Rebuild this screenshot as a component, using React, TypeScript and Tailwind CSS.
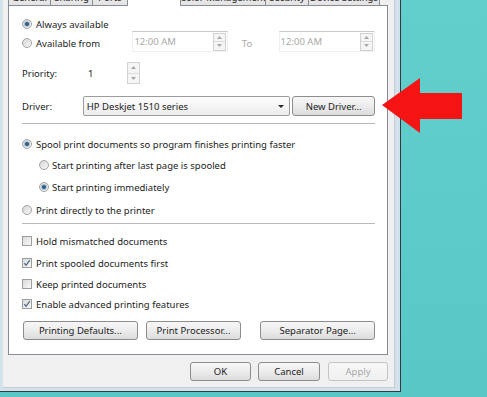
import React from 'react';
import clsx from 'clsx';

const Radio = ({ checked }: { checked?: boolean }) => (
    <span className="w-[10px] h-[10px] shrink-0 rounded-full border border-[#a3a3a3] bg-linear-to-br from-[#d6d6d6] to-[#f8f8f8] flex items-center justify-center">
        {checked && <span className="w-[4px] h-[4px] rounded-full bg-[#2f5a80] ring-1 ring-[#a9c2d6]" />}
    </span>
);

const Checkbox = ({ checked }: { checked?: boolean }) => (
    <span className="w-[10px] h-[10px] shrink-0 border border-[#9e9e9e] bg-linear-to-br from-[#dadada] to-[#f9f9f9] flex items-center justify-center">
        {checked && (
            <svg viewBox="0 0 8 8" className="w-[8px] h-[8px]">
                <path d="M1.3 4.3 L3.1 6.3 L6.8 1.1" stroke="#4f6b8c" strokeWidth="1.3" fill="none" />
            </svg>
        )}
    </span>
);

const Spinner = ({ className }: { className?: string }) => (
    <div className={clsx('w-[13px] flex flex-col border border-[#d2d2d2] bg-[#f5f5f5]', className)}>
        <div className="flex-1 flex items-center justify-center border-b border-[#dcdcdc]">
            <svg viewBox="0 0 5 3" className="w-[5px] h-[3px]"><path d="M0 3 L2.5 0 L5 3 Z" fill="#a8a8a8" /></svg>
        </div>
        <div className="flex-1 flex items-center justify-center">
            <svg viewBox="0 0 5 3" className="w-[5px] h-[3px]"><path d="M0 0 L2.5 3 L5 0 Z" fill="#a8a8a8" /></svg>
        </div>
    </div>
);

const TimeField = ({ className }: { className?: string }) => (
    <div className={clsx('self-start -mt-[2px] h-[21px] flex items-center border-t border-[#c9c9c9] border-l border-r border-b border-l-[#f0f0f0] border-r-[#f0f0f0] border-b-[#f0f0f0] pl-[1px] pr-[1px]', className)}>
        <span className="flex-1 text-[#a8a8a8]">12:00 AM</span>
        <Spinner className="h-[18px]" />
    </div>
);

const Button = ({ children, className }: { children: React.ReactNode; className?: string }) => (
    <div className={clsx('h-[19px] flex items-center justify-center rounded-[3px] border border-[#8d8d8d] bg-linear-to-b from-[#f7f7f7] via-[#ececec] to-[#dcdcdc] text-[#222]', className)}>
        {children}
    </div>
);

const tabs = [
    { label: 'General', w: 'w-[42px]' },
    { label: 'Sharing', w: 'w-[42px]' },
    { label: 'Ports', w: 'w-[35px]' },
    { label: 'Advanced', w: 'w-[53px]', active: true },
    { label: 'Color Management', w: 'w-[85px]' },
    { label: 'Security', w: 'w-[43px]' },
    { label: 'Device Settings', w: 'w-[72px] border-r' },
];

const App: React.FC = () => {
    return (
        <div className="relative w-[487px] h-[397px] overflow-hidden bg-linear-to-b from-[#62cfcd] to-[#58c7c5] font-['Noto_Sans','Open_Sans',sans-serif] text-[9.5px] leading-[13px] text-[#222]">
            <div className="w-[401px] -mt-[13px] border-r border-b border-[#2f3b42] bg-[#d3e2ea] pl-[3px] pr-[5px] pb-[3px]">
                <div className="bg-[#f0f0f0] border-r border-b border-[#c2ced6] pl-[5px] pr-[6px] pb-[6px]">
                    {/* tab strip */}
                    <div className="flex h-[18px] items-end">
                        {tabs.map(tab => (
                            <div
                                key={tab.label}
                                className={clsx(
                                    'flex justify-center whitespace-nowrap border-t border-l border-[#898c95] pt-[1px]',
                                    tab.w,
                                    tab.active
                                        ? 'relative z-10 h-[19px] -mb-[1px] bg-white items-start'
                                        : 'h-[18px] bg-linear-to-b from-[#f3f3f3] to-[#e3e3e3] items-center pt-[2px]'
                                )}
                            >
                                {tab.label}
                            </div>
                        ))}
                    </div>

                    {/* tab panel */}
                    <div className="border border-[#898c95] bg-white pl-[13px] pr-[12px] pt-[9px] pb-[14px]">
                        <div className="flex items-center h-[18px]">
                            <Radio checked />
                            <span className="ml-[4px]">Always available</span>
                        </div>
                        <div className="flex items-center h-[20px]">
                            <Radio />
                            <span className="ml-[4px] w-[97px]">Available from</span>
                            <TimeField className="w-[96px]" />
                            <span className="w-[51px] pl-[14px] text-[#a8a8a8]">To</span>
                            <TimeField className="w-[97px]" />
                        </div>
                        <div className="flex items-center h-[22px] mt-[9px]">
                            <span className="w-[66px]">Priority:</span>
                            <span className="w-[39px]">1</span>
                            <Spinner className="h-[22px]" />
                        </div>
                        <div className="flex items-center h-[20px] mt-[12px]">
                            <span className="w-[61px]">Driver:</span>
                            <div className="w-[208px] h-[20px] flex items-center rounded-[2px] border border-[#9c9c9c] bg-linear-to-b from-[#fdfdfd] to-[#ececec] pl-[3px] pr-[5px]">
                                <span className="flex-1">HP Deskjet 1510 series</span>
                                <svg viewBox="0 0 6 3" className="w-[6px] h-[3px]"><path d="M0 0 L6 0 L3 3 Z" fill="#2a2a2a" /></svg>
                            </div>
                            <Button className="ml-[2px] w-[83px] h-[20px]">New Driver...</Button>
                        </div>
                        <div className="mt-[7px] h-px bg-[#b8b8b8]" />

                        <div className="flex items-center h-[18px] mt-[11px]">
                            <Radio checked />
                            <span className="ml-[4px]">Spool print documents so program finishes printing faster</span>
                        </div>
                        <div className="flex items-center h-[18px] mt-[3px] pl-[17px]">
                            <Radio />
                            <span className="ml-[3px]">Start printing after last page is spooled</span>
                        </div>
                        <div className="flex items-center h-[18px] mt-[4px] pl-[17px]">
                            <Radio checked />
                            <span className="ml-[3px]">Start printing immediately</span>
                        </div>
                        <div className="flex items-center h-[18px] mt-[5px]">
                            <Radio />
                            <span className="ml-[4px]">Print directly to the printer</span>
                        </div>
                        <div className="mt-[4px] h-px bg-[#b8b8b8]" />

                        <div className="flex items-center h-[18px] mt-[8px]">
                            <Checkbox />
                            <span className="ml-[4px]">Hold mismatched documents</span>
                        </div>
                        <div className="flex items-center h-[18px] mt-[4px]">
                            <Checkbox checked />
                            <span className="ml-[4px]">Print spooled documents first</span>
                        </div>
                        <div className="flex items-center h-[18px] mt-[3px]">
                            <Checkbox />
                            <span className="ml-[4px]">Keep printed documents</span>
                        </div>
                        <div className="flex items-center h-[18px] mt-[2px]">
                            <Checkbox checked />
                            <span className="ml-[4px]">Enable advanced printing features</span>
                        </div>

                        <div className="flex mt-[8px]">
                            <Button className="ml-[1px] w-[115px]">Printing Defaults...</Button>
                            <Button className="ml-[8px] w-[96px]">Print Processor...</Button>
                            <Button className="ml-[19px] w-[115px]">Separator Page...</Button>
                        </div>
                    </div>

                    {/* dialog buttons */}
                    <div className="flex justify-end mt-[7px]">
                        <Button className="w-[61px] h-[18px] border-[#3d7bad] from-[#f2f9fd] via-[#e4f2fb] to-[#d2e8f6]">OK</Button>
                        <Button className="ml-[7px] w-[62px] h-[18px]">Cancel</Button>
                        <Button className="ml-[8px] w-[60px] h-[18px] border-[#c4c4c4] from-[#f6f6f6] via-[#f3f3f3] to-[#f0f0f0] text-[#a8a8a8]">Apply</Button>
                    </div>
                </div>
            </div>

            {/* red pointer arrow */}
            <svg viewBox="0 0 84 60" className="absolute left-[380px] top-[76px] w-[84px] h-[60px]">
                <polygon points="2,29 40,2 40,17 82,17 82,43 40,43 40,57" fill="#f41414" />
            </svg>
        </div>
    );
};

export default App;
